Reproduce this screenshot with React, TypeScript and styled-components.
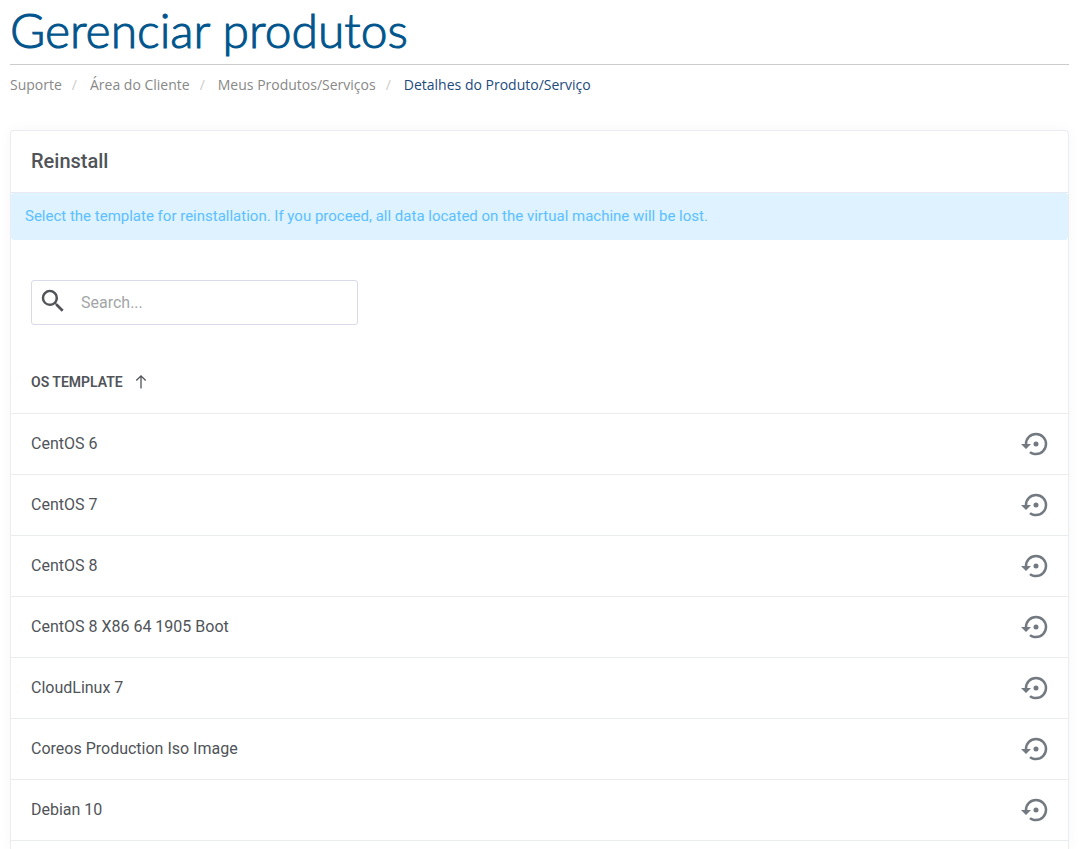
import React, { useState } from "react";
import styled, { createGlobalStyle } from "styled-components";

const GlobalStyle = createGlobalStyle`
  *, *::before, *::after { box-sizing: border-box; }
  body {
    margin: 0;
    background: #fff;
    color: #505459;
    font-family: Roboto, "Liberation Sans", sans-serif;
    font-size: 16px;
  }
`;

const Page = styled.div`
  display: flex;
  flex-direction: column;
  min-height: 100vh;
  padding: 0 11px 0 10px;
`;

const PageTitle = styled.h1`
  margin: 0;
  height: 65px;
  border-bottom: 1px solid #ccc;
  color: #00558c;
  font: 300 48px/60px Lato, "Liberation Sans", sans-serif;
  -webkit-text-stroke: 1px #00558c;
  white-space: nowrap;
`;

const Breadcrumb = styled.ol`
  display: flex;
  flex-wrap: wrap;
  margin: 0 0 35px;
  padding: 10px 0 0;
  list-style: none;
  font: 14px/20px "Open Sans", sans-serif;
`;

const Crumb = styled.li`
  color: #1c4b7c;

  & + &::before {
    content: "/";
    padding: 0 13px 0 10px;
    color: #ccc;
  }
`;

const CrumbLink = styled.a`
  color: #888;
  text-decoration: none;
`;

const Card = styled.main`
  flex: 1;
  border: 1px solid #ebecf2;
  border-bottom: 0;
  border-radius: 4px 4px 0 0;
  box-shadow: 0 0 14px rgba(0, 0, 0, 0.04);
`;

const CardTitle = styled.h2`
  margin: 0;
  padding: 0 20px;
  border-bottom: 1px solid #e9ebf0;
  font-size: 20px;
  font-weight: 500;
  line-height: 61px;
`;

const Alert = styled.p`
  margin: 0;
  padding: 12px 14px;
  border-radius: 3px;
  background: #def2ff;
  color: #5bc0ff;
  font-size: 15px;
  line-height: 23px;
`;

const SearchBox = styled.label`
  display: flex;
  align-items: center;
  width: 327px;
  max-width: calc(100% - 40px);
  height: 45px;
  margin: 40px 20px 26px;
  padding-left: 6px;
  border: 1px solid #d9d9e8;
  border-radius: 3px;

  svg {
    flex: none;
    margin-bottom: 4px;
  }
`;

const SearchInput = styled.input`
  flex: 1;
  min-width: 0;
  padding: 0 13px;
  border: 0;
  outline: 0;
  background: transparent;
  color: inherit;
  font: 16px/24px Roboto, sans-serif;

  &::placeholder {
    color: #a3a6a8;
    opacity: 1;
  }
`;

const Table = styled.table`
  width: 100%;
  border-collapse: collapse;
`;

const HeadCell = styled.th`
  height: 62px;
  padding: 0 20px;
  border-bottom: 1px solid #ebecf0;
  text-align: left;
`;

const SortButton = styled.button`
  display: flex;
  align-items: center;
  gap: 12px;
  padding: 0;
  border: 0;
  background: none;
  color: inherit;
  font: 600 14px/20px Roboto, sans-serif;
  text-transform: uppercase;
  cursor: pointer;
`;

const Cell = styled.td<{ $end?: boolean }>`
  height: 61px;
  padding: ${(p) => (p.$end ? "0 17px" : "0 20px")};
  border-bottom: 1px solid #ebecf0;
  line-height: 24px;
  text-align: ${(p) => (p.$end ? "right" : "left")};
`;

const RestoreButton = styled.button`
  display: inline-flex;
  vertical-align: middle;
  padding: 0;
  border: 0;
  background: none;
  color: #737980;
  cursor: pointer;
`;

const SearchIcon = () => (
  <svg width="30" height="30" viewBox="0 0 24 24" fill="currentColor" aria-hidden="true">
    <path d="M9.5,3A6.5,6.5 0 0,1 16,9.5C16,11.11 15.41,12.59 14.44,13.73L14.71,14H15.5L20.5,19L19,20.5L14,15.5V14.71L13.73,14.44C12.59,15.41 11.11,16 9.5,16A6.5,6.5 0 0,1 3,9.5A6.5,6.5 0 0,1 9.5,3M9.5,5C7,5 5,7 5,9.5C5,12 7,14 9.5,14C12,14 14,12 14,9.5C14,7 12,5 9.5,5Z" />
  </svg>
);

const ArrowIcon = ({ down }: { down: boolean }) => (
  <svg width="12" height="16" viewBox="0 0 12 16" fill="none" stroke="currentColor" strokeWidth="1.3" aria-hidden="true">
    <path d={down ? "M6 1.5V14.5M1.3 9.8L6 14.5L10.7 9.8" : "M6 14.5V2M1.3 6.5L6 1.8L10.7 6.5"} />
  </svg>
);

const RestoreIcon = () => (
  <svg width="30" height="30" viewBox="0 0 24 24" fill="currentColor" aria-hidden="true">
    <path d="M12,3A9,9 0 0,0 3,12H0L4,16L8,12H5A7,7 0 0,1 12,5A7,7 0 0,1 19,12A7,7 0 0,1 12,19C10.5,19 9.09,18.5 7.94,17.7L6.5,19.14C8.04,20.3 9.94,21 12,21A9,9 0 0,0 21,12A9,9 0 0,0 12,3M14,12A2,2 0 0,0 12,10A2,2 0 0,0 10,12A2,2 0 0,0 12,14A2,2 0 0,0 14,12Z" />
  </svg>
);

const templates = [
  "CentOS 6",
  "CentOS 7",
  "CentOS 8",
  "CentOS 8 X86 64 1905 Boot",
  "CloudLinux 7",
  "Coreos Production Iso Image",
  "Debian 10",
];

export default function App() {
  const [query, setQuery] = useState("");
  const [descending, setDescending] = useState(false);
  const found = templates.filter((name) => name.toLowerCase().includes(query.toLowerCase()));
  const rows = descending ? found.reverse() : found;

  return (
    <>
      <GlobalStyle />
      <Page>
        <PageTitle>Gerenciar produtos</PageTitle>
        <nav>
          <Breadcrumb>
            <Crumb><CrumbLink href="#">Suporte</CrumbLink></Crumb>
            <Crumb><CrumbLink href="#">Área do Cliente</CrumbLink></Crumb>
            <Crumb><CrumbLink href="#">Meus Produtos/Serviços</CrumbLink></Crumb>
            <Crumb aria-current="page">Detalhes do Produto/Serviço</Crumb>
          </Breadcrumb>
        </nav>
        <Card>
          <CardTitle>Reinstall</CardTitle>
          <Alert>
            Select the template for reinstallation. If you proceed, all data located on the virtual machine will be lost.
          </Alert>
          <SearchBox>
            <SearchIcon />
            <SearchInput
              type="text"
              placeholder="Search..."
              aria-label="Search"
              value={query}
              onChange={(e) => setQuery(e.target.value)}
            />
          </SearchBox>
          <Table>
            <thead>
              <tr>
                <HeadCell colSpan={2}>
                  <SortButton type="button" onClick={() => setDescending(!descending)}>
                    OS Template
                    <ArrowIcon down={descending} />
                  </SortButton>
                </HeadCell>
              </tr>
            </thead>
            <tbody>
              {rows.map((name) => (
                <tr key={name}>
                  <Cell>{name}</Cell>
                  <Cell $end>
                    <RestoreButton type="button" aria-label={`Reinstall ${name}`}>
                      <RestoreIcon />
                    </RestoreButton>
                  </Cell>
                </tr>
              ))}
            </tbody>
          </Table>
        </Card>
      </Page>
    </>
  );
}
